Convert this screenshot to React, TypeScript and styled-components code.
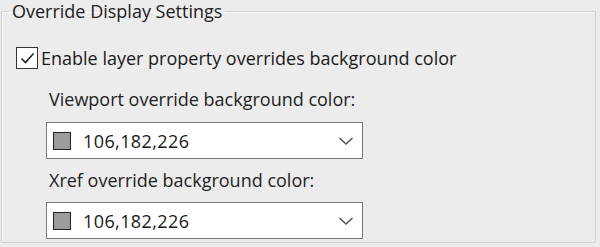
import React from "react";
import styled, { createGlobalStyle } from "styled-components";

const GlobalStyle = createGlobalStyle`
  html, body {
    margin: 0;
    padding: 0;
    background: #ececec;
  }
  body {
    font-family: "Open Sans", "Noto Sans", sans-serif;
    color: #1a1a1a;
  }
`;

const Page = styled.div`
  width: 600px;
  height: 247px;
  padding: 0 0 0 1px;
  box-sizing: border-box;
  overflow: hidden;
`;

const GroupBox = styled.fieldset`
  width: 595px;
  height: 243px;
  box-sizing: border-box;
  margin: 0;
  padding: 0;
  border: 1px solid #d2d2d2;
  box-shadow: inset 1px 1px 0 #f8f8f8;
  display: flex;
  flex-direction: column;
  align-items: flex-start;
`;

const Legend = styled.legend`
  margin-left: 7px;
  padding: 0 3px;
  font-size: 18px;
  line-height: 23px;
  color: #202020;
`;

const CheckRow = styled.label`
  display: flex;
  align-items: center;
  gap: 3px;
  margin-top: 24px;
  margin-left: 14px;
  font-size: 18px;
  line-height: 22px;
  cursor: default;
`;

const CheckBox = styled.span`
  width: 20px;
  height: 20px;
  border: 1px solid #333;
  background: #fff;
  display: flex;
  align-items: center;
  justify-content: center;
`;

const FieldLabel = styled.div<{ $top: number }>`
  margin-top: ${(p) => p.$top}px;
  margin-left: 47px;
  font-size: 18px;
  line-height: 22px;
  color: #222;
`;

const Select = styled.div<{ $top: number }>`
  margin-top: ${(p) => p.$top}px;
  margin-left: 44px;
  width: 317px;
  height: 37px;
  box-sizing: border-box;
  border: 1px solid #7a7a7a;
  background: #fff;
  display: flex;
  align-items: center;
  padding: 0 8px 0 6px;
`;

const Swatch = styled.span<{ $color: string }>`
  width: 16px;
  height: 16px;
  border: 1px solid #222;
  background: ${(p) => p.$color};
  flex: none;
`;

const Value = styled.span`
  margin-left: 12px;
  font-size: 18px;
  letter-spacing: 0.4px;
  flex: 1;
`;

const Chevron = () => (
  <svg width="16" height="10" viewBox="0 0 16 10">
    <path d="M1.5 2 L8 8 L14.5 2" fill="none" stroke="#555" strokeWidth="1.6" />
  </svg>
);

const ColorSelect = ({ top, value }: { top: number; value: string }) => (
  <Select $top={top}>
    <Swatch $color="#9b9b9b" />
    <Value>{value}</Value>
    <Chevron />
  </Select>
);

export default function App() {
  return (
    <Page>
      <GlobalStyle />
      <GroupBox>
        <Legend>Override Display Settings</Legend>
        <CheckRow>
          <CheckBox>
            <svg width="15" height="13" viewBox="0 0 15 13">
              <path d="M1.5 6.5 L5.5 10.5 L13.5 1.5" fill="none" stroke="#222" strokeWidth="1.6" />
            </svg>
          </CheckBox>
          Enable layer property overrides background color
        </CheckRow>
        <FieldLabel $top={19}>Viewport override background color:</FieldLabel>
        <ColorSelect top={12} value="106,182,226" />
        <FieldLabel $top={10}>Xref override background color:</FieldLabel>
        <ColorSelect top={11} value="106,182,226" />
      </GroupBox>
    </Page>
  );
}
